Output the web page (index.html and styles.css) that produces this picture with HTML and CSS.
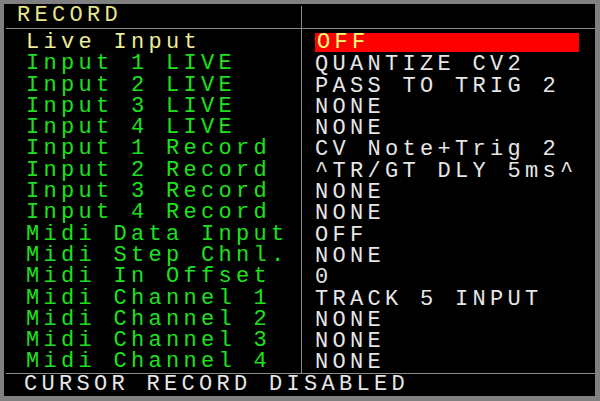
FILE: index.html
```html
<!DOCTYPE html>
<html>
<head>
<meta charset="utf-8">
<link rel="stylesheet" href="styles.css">
</head>
<body>
<div class="screen">
  <div class="head">
    <div class="title">RECORD</div>
    <div class="vline vline-top"></div>
    <div class="head-right"></div>
  </div>
  <div class="hline"></div>
  <div class="body">
    <div class="labels">
      <div class="row sel">Live Input</div>
      <div class="row">Input 1 LIVE</div>
      <div class="row">Input 2 LIVE</div>
      <div class="row">Input 3 LIVE</div>
      <div class="row">Input 4 LIVE</div>
      <div class="row">Input 1 Record</div>
      <div class="row">Input 2 Record</div>
      <div class="row">Input 3 Record</div>
      <div class="row">Input 4 Record</div>
      <div class="row">Midi Data Input</div>
      <div class="row">Midi Step Chnl.</div>
      <div class="row">Midi In Offset</div>
      <div class="row">Midi Channel 1</div>
      <div class="row">Midi Channel 2</div>
      <div class="row">Midi Channel 3</div>
      <div class="row">Midi Channel 4</div>
    </div>
    <div class="vline"></div>
    <div class="values">
      <div class="row"><span class="cursor">OFF</span></div>
      <div class="row">QUANTIZE CV2</div>
      <div class="row">PASS TO TRIG 2</div>
      <div class="row">NONE</div>
      <div class="row">NONE</div>
      <div class="row">CV Note+Trig 2</div>
      <div class="row">^TR/GT DLY 5ms^</div>
      <div class="row">NONE</div>
      <div class="row">NONE</div>
      <div class="row">OFF</div>
      <div class="row">NONE</div>
      <div class="row">0</div>
      <div class="row">TRACK 5 INPUT</div>
      <div class="row">NONE</div>
      <div class="row">NONE</div>
      <div class="row">NONE</div>
    </div>
  </div>
  <div class="hline"></div>
  <div class="foot">CURSOR RECORD DISABLED</div>
</div>
</body>
</html>
```
FILE: styles.css
```css
html, body {
  margin: 0;
  padding: 0;
  background: #808080;
}
.screen {
  box-sizing: border-box;
  width: 600px;
  height: 401px;
  border-style: solid;
  border-color: #808080;
  border-width: 4px 5px 5px 4px;
  background: #000;
  display: flex;
  flex-direction: column;
  font-family: "Liberation Mono", monospace;
  font-size: 22px;
  letter-spacing: 4.3px;
  white-space: nowrap;
}
.head {
  height: 24px;
  flex: none;
  display: grid;
  grid-template-columns: 297px 1px 1fr;
}
.title {
  color: #e6e68c;
  padding-left: 13px;
  line-height: 24px;
}
.vline {
  background: #8a8a8a;
  width: 1px;
}
.vline-top {
  margin-top: 2px;
}
.hline {
  height: 1px;
  background: #8a8a8a;
  margin-left: 2px;
  flex: none;
}
.body {
  flex: 1;
  min-height: 0;
  display: grid;
  grid-template-columns: 297px 1px 1fr;
}
.labels {
  padding: 3px 0 0 22px;
  color: #1ee01e;
}
.labels .sel {
  color: #eded96;
}
.values {
  padding: 3px 0 0 13px;
  color: #e6e6e6;
}
.row {
  height: 21.3px;
  line-height: 21.3px;
}
.cursor {
  display: block;
  margin-top: 1px;
  height: 19px;
  line-height: 19px;
  width: 262px;
  padding-left: 2px;
  background: #ff0000;
  color: #ffff7a;
}
.foot {
  height: 22px;
  flex: none;
  line-height: 22px;
  padding-left: 20px;
  color: #e6e6e6;
}
```
